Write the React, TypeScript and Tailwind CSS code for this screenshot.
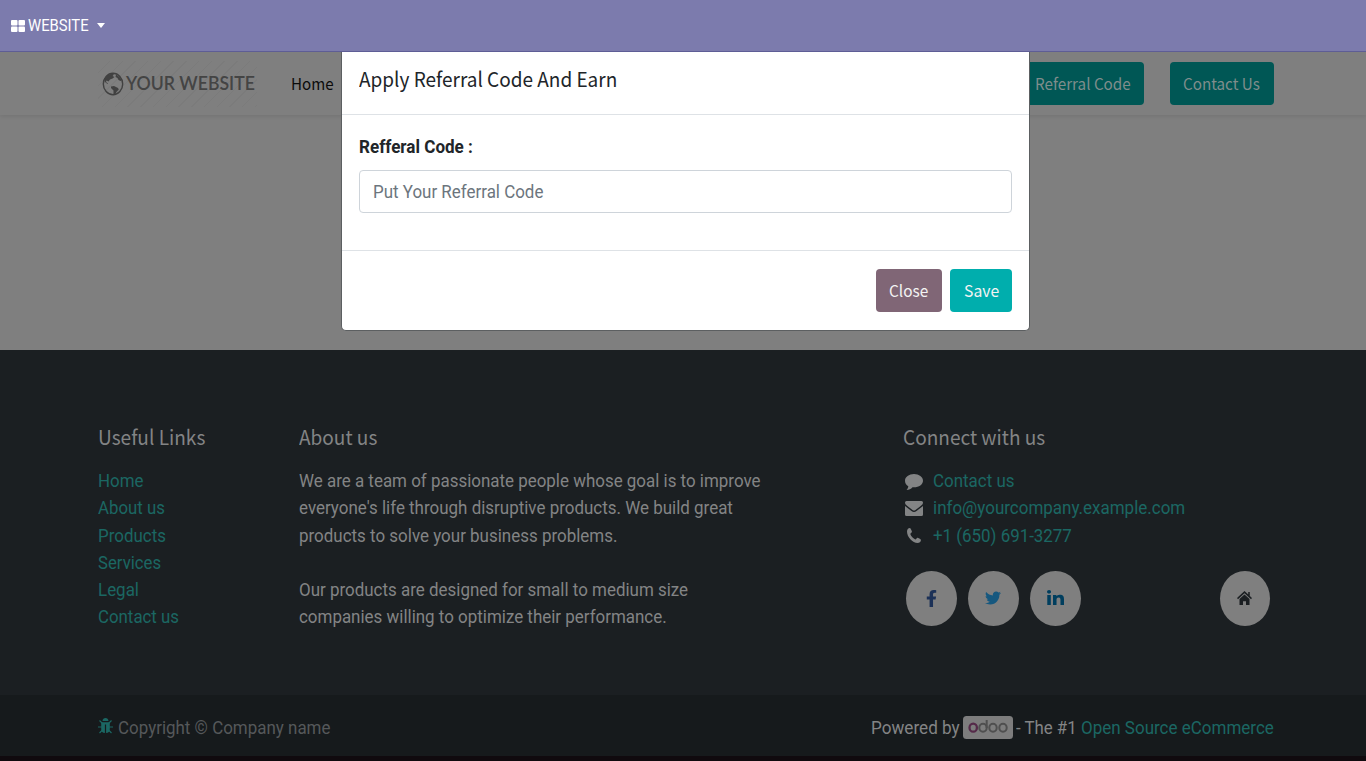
import { useLayoutEffect, useRef, useState } from "react";
import { FaFacebookF, FaTwitter, FaLinkedinIn } from "react-icons/fa";

const roboto = "font-[Roboto,sans-serif]";
const source = "font-['Noto_Sans_CJK_SC',sans-serif]";

/* Single line of text condensed or widened to fill an exact width. */
function Fit({ w, children, className = "" }: { w: number; children: string; className?: string }) {
  const ref = useRef<HTMLSpanElement>(null);
  const [k, setK] = useState(1);
  useLayoutEffect(() => {
    if (ref.current) setK(w / ref.current.offsetWidth);
  }, [w]);
  return (
    <span className={`block shrink-0 whitespace-nowrap ${className}`} style={{ width: w }}>
      <span ref={ref} className="inline-block origin-left align-top" style={{ transform: `scaleX(${k})` }}>
        {children}
      </span>
    </span>
  );
}

function Globe() {
  return (
    <svg className="h-6 w-[22px] shrink-0" viewBox="0 0 22 24" preserveAspectRatio="none">
      <ellipse cx="11" cy="12" rx="9.7" ry="10.7" fill="none" stroke="#414141" strokeWidth="1.4" />
      <path fill="#414141" d="M3 6 6 3l4-1.500 2 1-1.500 1.500 2 1-2 1.500-2.500 1-1.500 2-2-1-.5 1.500 2 1.500-.5.5-2.500-2-1-3zM14 2.500l4 3 1.500 3-1 .5-2-1-1-2-2-1zM9 14.500l3-.5 4 2 .8 1.500-2 2-1.800 3-1.500-.5v-3.500l-2.500-2.500z" />
    </svg>
  );
}

const links: [string, number][] = [
  ["Home", 45.500], ["About us", 66.500], ["Products", 68], ["Services", 63.500], ["Legal", 41], ["Contact us", 81.500],
];
const about: [string, number][] = [
  ["We are a team of passionate people whose goal is to improve", 462],
  ["everyone's life through disruptive products. We build great", 433.500],
  ["products to solve your business problems.", 318],
  ["", 0],
  ["Our products are designed for small to medium size", 389.500],
  ["companies willing to optimize their performance.", 368],
];

export default function App() {
  return (
    <div className={`relative flex h-[761px] w-[1366px] flex-col overflow-hidden bg-[#7f7f7f] ${roboto}`}>
      <nav className="flex h-[52px] shrink-0 items-center border-b border-[#5f5e97] bg-[#7c7bad] pl-[11px] text-white">
        <svg className="mr-[3px] h-3 w-[14px]" viewBox="0 0 14 12" fill="currentColor">
          <rect width="6.5" height="5.500" rx="1" />
          <rect x="7.5" width="6.500" height="5.500" rx="1" />
          <rect y="6.500" width="6.500" height="5.500" rx="1" />
          <rect x="7.500" y="6.500" width="6.500" height="5.500" rx="1" />
        </svg>
        <Fit w={61} className="text-[16.500px] leading-[20px]">WEBSITE</Fit>
        <svg className="mb-px ml-2 h-[5px] w-2" viewBox="0 0 8 5" fill="currentColor"><path d="M0 0h8L4 5z" /></svg>
      </nav>

      <header className="flex h-[63px] shrink-0 items-center pl-[98px] shadow-[0_2px_4px_rgba(0,0,0,0.08)]">
        <div className="flex h-[46px] w-[159px] items-center bg-[repeating-linear-gradient(135deg,#7f7f7f_0_8px,#7b7b7b_8px_9px)] pl-1">
          <Globe />
          <Fit w={129} className="mb-px ml-[1.500px] font-[Lato,sans-serif] text-[18.500px] leading-6 font-semibold text-[#444444]">YOUR WEBSITE</Fit>
        </div>
        <Fit w={43} className={`mb-0.5 ml-[34px] text-[16.200px] leading-6 text-[#0b0b0b] ${source}`}>Home</Fit>
        <div className="ml-auto flex h-[43px] w-[130px] items-center justify-end rounded bg-[#005755] pr-[13.500px] pb-0.5 text-[#7f8d8c]">
          <Fit w={96} className={`text-[16.200px] leading-6 ${source}`}>Referral Code</Fit>
        </div>
        <div className="mr-[92px] ml-[26px] flex h-[43px] w-[104px] items-center justify-center rounded bg-[#005755] pr-px pb-0.5 text-[#7f8d8c]">
          <Fit w={77} className={`text-[16.200px] leading-6 ${source}`}>Contact Us</Fit>
        </div>
      </header>

      <main className="h-[235px] shrink-0" />

      <footer className="flex h-[345px] shrink-0 bg-[#1b1f22] pt-[71px] pl-[98px] text-[18.200px] leading-[27.300px] text-[#838485]">
        <section className="w-[201px]">
          <Fit w={107} className={`mb-[16px] text-[20.500px] leading-[30px] ${source}`}>Useful Links</Fit>
          {links.map(([t, w]) => <Fit key={t} w={w} className="text-[#1b6763]">{t}</Fit>)}
        </section>
        <section className="w-[604px]">
          <Fit w={78} className={`mb-[16px] text-[20.500px] leading-[30px] ${source}`}>About us</Fit>
          {about.map(([t, w]) => t ? <Fit key={t} w={w}>{t}</Fit> : <div key="gap" className="h-[27.300px]" />)}
        </section>
        <section className="w-[371px]">
          <Fit w={142} className={`mb-[16px] text-[20.500px] leading-[30px] ${source}`}>Connect with us</Fit>
          <div className="flex items-center gap-3">
            <svg className="mt-0.5 ml-0.5 h-4 w-[18px]" viewBox="0 0 18 16" fill="currentColor"><path d="M9 0c5 0 9 3 9 6.7s-4 6.6-9 6.600H7.500C6 15 4 16 1.500 16c1-1 1.700-2.300 1.800-3.800C1.200 10.900 0 9 0 6.700 0 3 4 0 9 0z" /></svg>
            <Fit w={82} className="-ml-0.5 text-[#1b6763]">Contact us</Fit>
          </div>
          <div className="flex items-center gap-3">
            <svg className="mt-0.5 ml-0.5 h-[15px] w-[18px]" viewBox="0 0 18 15" fill="currentColor"><path d="M0 1.500Q0 0 1.500 0h15Q18 0 18 1.500C18 3 17 4 16 4.700L10.500 9Q9 10 7.500 9L2 4.700C1 4 0 3 0 1.500zM0 5l6.500 5Q9 12 11.500 10L18 5v8.500q0 1.500-1.500 1.500h-15Q0 15 0 13.500z" /></svg>
            <Fit w={252} className="-ml-0.5 text-[#1b6763]">info@yourcompany.example.com</Fit>
          </div>
          <div className="flex items-center">
            <svg className="ml-1 h-[15px] w-[14px]" viewBox="0 0 14 14" preserveAspectRatio="none" fill="currentColor"><path d="M14 11c0 2-1.800 3-3.300 3C5.500 14 0 8.500 0 3.300 0 1.700 1 0 3 0c.5 0 2 3 2 3.500 0 .8-1.700 1.500-1.700 2.100C4 7.600 6.300 10 8.400 10.700c.6 0 1.300-1.700 2.100-1.700.5 0 3.500 1.500 3.500 2z" /></svg>
            <Fit w={138.500} className="ml-3 text-[#1b6763]">+1 (650) 691-3277</Fit>
          </div>
          <div className="mt-[22px] ml-[3px] flex gap-[11px]">
            <span className="flex h-[55px] w-[51px] items-center justify-center rounded-[50%] bg-[#7f7f7f]"><FaFacebookF className="h-[17px] w-[11px] text-[#1c3157]" preserveAspectRatio="none" /></span>
            <span className="flex h-[55px] w-[51px] items-center justify-center rounded-[50%] bg-[#7f7f7f] pr-px"><FaTwitter className="h-[16px] w-[16px] text-[#16587f]" /></span>
            <span className="flex h-[55px] w-[51px] items-center justify-center rounded-[50%] bg-[#7f7f7f] pt-px"><FaLinkedinIn className="h-[17px] w-[17px] text-[#003e5e]" preserveAspectRatio="none" /></span>
            <span className="mr-1 ml-auto flex h-[55px] w-[50px] items-center justify-center rounded-[50%] bg-[#7f7f7f] pr-px">
              <svg className="h-[14px] w-[15px] text-[#1b1f22]" viewBox="0 0 15 13" preserveAspectRatio="none"><path d="M.5 7 7.500 1l7 6M12 1v4" fill="none" stroke="currentColor" strokeWidth="1.500" /><path fill="currentColor" d="m7.500 3.200 5 4.300V13H9V9.500H6V13H2.500V7.500z" /></svg>
            </span>
          </div>
        </section>
      </footer>

      <div className="flex h-[61px] shrink-0 items-center bg-[#161a1c] pt-1 pr-[92px] pl-[98px] text-[18.200px] leading-[27px] text-[#838485]">
        <svg className="mr-[4.500px] mb-1 h-4 w-[15px] text-[#1b6763]" viewBox="0 0 15 16" preserveAspectRatio="none"><path fill="currentColor" d="M4.500 3C4.500 1 6 0 7.500 0S10.500 1 10.500 3zM3.200 4.200h8.600V11c0 2.500-1.500 4-3.700 4V6.500H6.900V15c-2.200 0-3.700-1.500-3.700-4z" /><path stroke="currentColor" strokeWidth="1.200" fill="none" d="m1.500 2.500 3 3m9-3-3 3M0 9h4m7 0h4M1.500 15l3-3m9 3-3-3" /></svg>
        <Fit w={212.500} className="text-[#55585a]">Copyright © Company name</Fit>
        <div className="ml-auto flex items-center">
          <Fit w={88.500}>Powered by</Fit>
          <svg className="mr-[3px] ml-[3px] h-[23px] w-[50px]" viewBox="0 0 50 23">
            <rect width="50" height="23" rx="3.500" fill="#7d7d7d" />
            <g fill="none" strokeWidth="2" stroke="#4f4f4f">
              <ellipse cx="10.200" cy="11.700" rx="3.700" ry="4" stroke="#552a49" strokeWidth="2.300" />
              <ellipse cx="20" cy="11.700" rx="3.700" ry="4" />
              <path d="M23.700 4v8" />
              <ellipse cx="30" cy="11.700" rx="3.700" ry="4" />
              <ellipse cx="40" cy="11.700" rx="3.700" ry="4" />
            </g>
          </svg>
          <Fit w={61}>- The #1</Fit>
          <Fit w={192.500} className="mr-px ml-1 text-[#1b6763]">Open Source eCommerce</Fit>
        </div>
      </div>
      <div className="h-[5px] shrink-0 bg-[#100a0e]" />

      <div role="dialog" className="absolute top-[52px] left-[341px] w-[689px] rounded-b-[5px] border border-t-0 border-[#5c5f61] bg-white text-[#212529]">
        <div className="flex h-[63px] items-center border-b border-[#dee2e6] pb-[10px] pl-[17px]">
          <Fit w={258.500} className={`text-[20.500px] leading-[30px] ${source}`}>Apply Referral Code And Earn</Fit>
        </div>
        <div className="h-[136px] border-b border-[#dee2e6] px-[17px] pt-[18px]">
          <Fit w={113.500} className="text-[18.200px] leading-[27px] font-bold">Refferal Code :</Fit>
          <div className="mt-[10px] flex h-[43px] w-[653px] items-center rounded border border-[#ced4da] pl-[13px] text-[#6c757d]">
            <Fit w={170.500} className="text-[18.200px] leading-[27px]">Put Your Referral Code</Fit>
          </div>
        </div>
        <div className="flex h-[79px] items-center justify-end gap-2 pr-[17px] text-[#f3f3f3]">
          <div className="flex h-[43px] w-[66px] items-center justify-center rounded bg-[#806676] pr-px pb-0.5"><Fit w={39} className={`text-[16.200px] leading-6 ${source}`}>Close</Fit></div>
          <div className="flex h-[43px] w-[62px] items-center justify-center rounded bg-[#00aead] pb-0.5"><Fit w={35} className={`text-[16.200px] leading-6 ${source}`}>Save</Fit></div>
        </div>
      </div>
    </div>
  );
}
